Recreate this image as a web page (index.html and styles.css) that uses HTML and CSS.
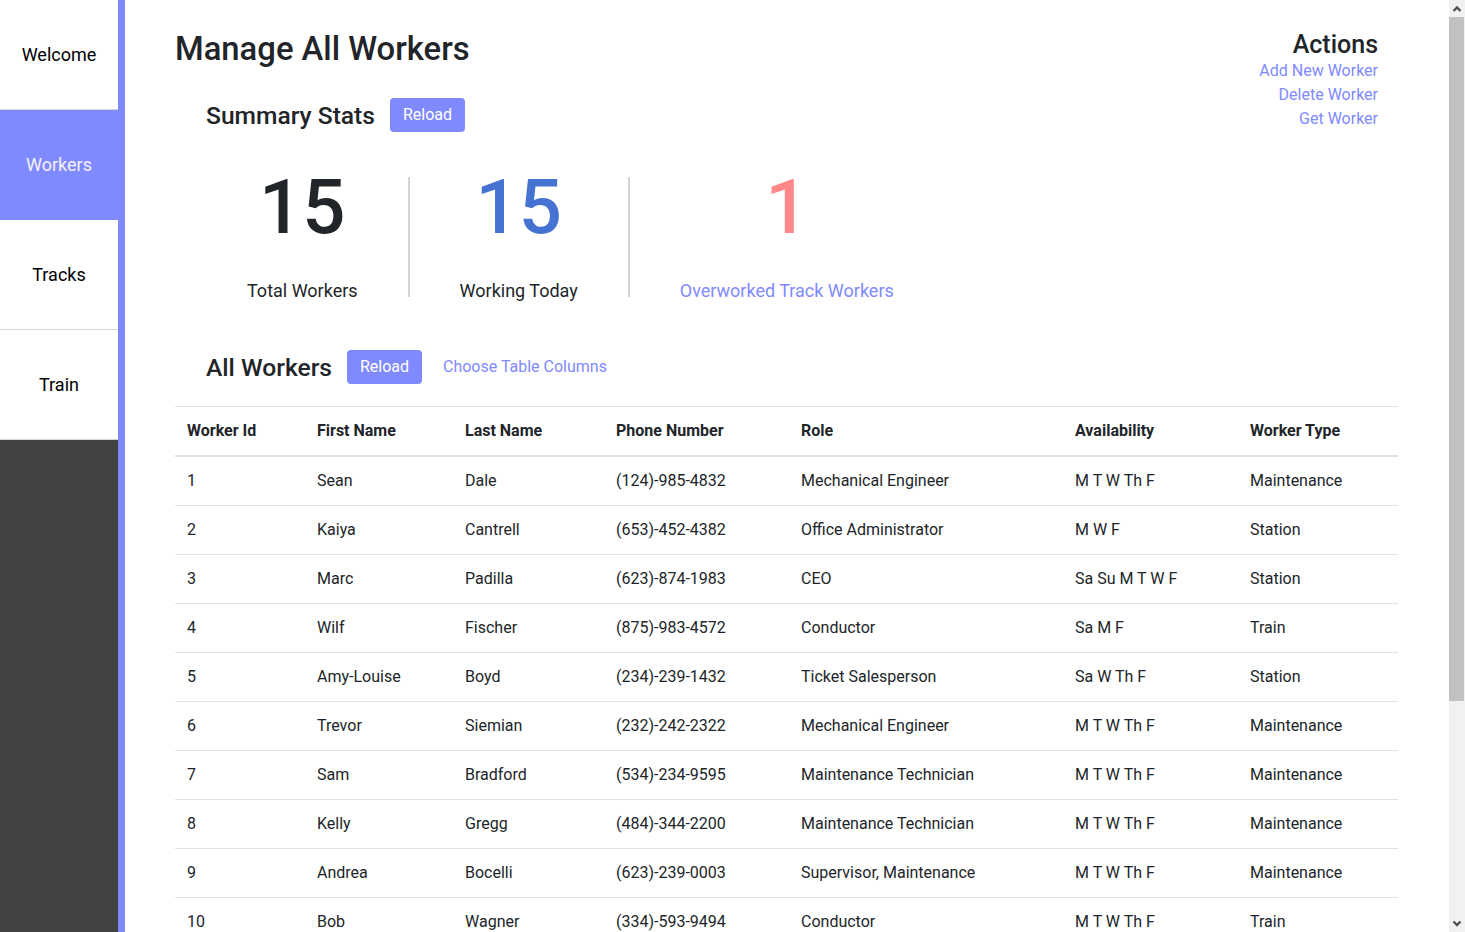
FILE: index.html
```html
<!DOCTYPE html>
<html lang="en">
<head>
<meta charset="utf-8">
<title>Manage All Workers</title>
<link rel="stylesheet" href="styles.css">
</head>
<body>
<div class="app">
  <nav class="sidebar">
    <a class="nav-item">Welcome</a>
    <a class="nav-item active">Workers</a>
    <a class="nav-item">Tracks</a>
    <a class="nav-item">Train</a>
    <div class="nav-fill"></div>
  </nav>
  <main class="main">
    <div class="top">
      <div class="top-left">
        <h1 class="title">Manage All Workers</h1>
        <div class="section-head summary-head">
          <h3 class="section-title">Summary Stats</h3>
          <button class="btn">Reload</button>
        </div>
        <div class="stats">
          <div class="stat">
            <div class="stat-num">15</div>
            <div class="stat-label">Total Workers</div>
          </div>
          <div class="stat">
            <div class="stat-num blue">15</div>
            <div class="stat-label">Working Today</div>
          </div>
          <div class="stat">
            <div class="stat-num red">1</div>
            <div class="stat-label link">Overworked Track Workers</div>
          </div>
        </div>
      </div>
      <div class="actions">
        <h3 class="actions-title">Actions</h3>
        <a class="link">Add New Worker</a>
        <a class="link">Delete Worker</a>
        <a class="link">Get Worker</a>
      </div>
    </div>

    <div class="section-head workers-head">
      <h3 class="section-title">All Workers</h3>
      <button class="btn">Reload</button>
      <a class="link choose">Choose Table Columns</a>
    </div>

    <table class="table">
      <colgroup>
        <col class="c1"><col class="c2"><col class="c3"><col class="c4"><col class="c5"><col class="c6"><col class="c7">
      </colgroup>
      <thead>
        <tr><th>Worker Id</th><th>First Name</th><th>Last Name</th><th>Phone Number</th><th>Role</th><th>Availability</th><th>Worker Type</th></tr>
      </thead>
      <tbody>
        <tr><td>1</td><td>Sean</td><td>Dale</td><td>(124)-985-4832</td><td>Mechanical Engineer</td><td>M T W Th F</td><td>Maintenance</td></tr>
        <tr><td>2</td><td>Kaiya</td><td>Cantrell</td><td>(653)-452-4382</td><td>Office Administrator</td><td>M W F</td><td>Station</td></tr>
        <tr><td>3</td><td>Marc</td><td>Padilla</td><td>(623)-874-1983</td><td>CEO</td><td>Sa Su M T W F</td><td>Station</td></tr>
        <tr><td>4</td><td>Wilf</td><td>Fischer</td><td>(875)-983-4572</td><td>Conductor</td><td>Sa M F</td><td>Train</td></tr>
        <tr><td>5</td><td>Amy-Louise</td><td>Boyd</td><td>(234)-239-1432</td><td>Ticket Salesperson</td><td>Sa W Th F</td><td>Station</td></tr>
        <tr><td>6</td><td>Trevor</td><td>Siemian</td><td>(232)-242-2322</td><td>Mechanical Engineer</td><td>M T W Th F</td><td>Maintenance</td></tr>
        <tr><td>7</td><td>Sam</td><td>Bradford</td><td>(534)-234-9595</td><td>Maintenance Technician</td><td>M T W Th F</td><td>Maintenance</td></tr>
        <tr><td>8</td><td>Kelly</td><td>Gregg</td><td>(484)-344-2200</td><td>Maintenance Technician</td><td>M T W Th F</td><td>Maintenance</td></tr>
        <tr><td>9</td><td>Andrea</td><td>Bocelli</td><td>(623)-239-0003</td><td>Supervisor, Maintenance</td><td>M T W Th F</td><td>Maintenance</td></tr>
        <tr><td>10</td><td>Bob</td><td>Wagner</td><td>(334)-593-9494</td><td>Conductor</td><td>M T W Th F</td><td>Train</td></tr>
        <tr><td>11</td><td>Priya</td><td>Sharma</td><td>(412)-555-0198</td><td>Track Inspector</td><td>Sa Su M T W Th F</td><td>Track</td></tr>
        <tr><td>12</td><td>Leon</td><td>Hart</td><td>(745)-310-2284</td><td>Track Technician</td><td>M T W Th F</td><td>Track</td></tr>
        <tr><td>13</td><td>Nadia</td><td>Okafor</td><td>(918)-402-7731</td><td>Conductor</td><td>Su M T W</td><td>Train</td></tr>
        <tr><td>14</td><td>Ruben</td><td>Castillo</td><td>(305)-667-4120</td><td>Station Attendant</td><td>Sa Su Th F</td><td>Station</td></tr>
        <tr><td>15</td><td>Hannah</td><td>Lindqvist</td><td>(561)-820-3397</td><td>Track Engineer</td><td>M W Th F</td><td>Track</td></tr>
      </tbody>
    </table>
  </main>
  <div class="scrollbar" aria-hidden="true">
    <div class="sb-btn sb-up">
      <svg width="16" height="17" viewBox="0 0 16 17"><polyline points="4.5,11 8,7.5 11.5,11" fill="none" stroke="#505050" stroke-width="2.4"/></svg>
    </div>
    <div class="sb-thumb"></div>
    <div class="sb-track"></div>
    <div class="sb-btn sb-down">
      <svg width="16" height="16" viewBox="0 0 16 16"><polyline points="4.5,5.5 8,9 11.5,5.5" fill="none" stroke="#505050" stroke-width="2.4"/></svg>
    </div>
  </div>
</div>
</body>
</html>
```

FILE: styles.css
```css
* { box-sizing: border-box; }

html, body {
  margin: 0;
  padding: 0;
}

body {
  font-family: Roboto, "Liberation Sans", Arial, sans-serif;
  font-size: 16px;
  line-height: 1.5;
  color: #212529;
  background: #fff;
}

.app {
  display: flex;
  min-height: 100vh;
}

/* Sidebar */
.sidebar {
  width: 125px;
  flex: 0 0 125px;
  display: flex;
  flex-direction: column;
  border-right: 7px solid #808aff;
}

.nav-item {
  height: 110px;
  flex: 0 0 110px;
  display: flex;
  align-items: center;
  justify-content: center;
  font-size: 18px;
  color: #000;
  border-bottom: 1px solid #d6d6d6;
  cursor: pointer;
}

.nav-item.active {
  background: #808aff;
  color: #f4f2ff;
  border-bottom-color: #808aff;
}

.nav-fill {
  flex: 1;
  background: #424242;
}

/* Main */
.main {
  flex: 1;
  min-width: 0;
  padding: 0 51px 35px 50px;
}

.top {
  display: flex;
  justify-content: space-between;
  align-items: flex-start;
}

.title {
  margin: 30px 0 0 0;
  font-size: 32.8px;
  font-weight: 500;
  line-height: 1.2;
}

.section-head {
  display: flex;
  align-items: center;
  padding-left: 31px;
}

.summary-head {
  margin-top: 29px;
}

.section-title {
  margin: 0 15px 0 0;
  font-size: 24.6px;
  font-weight: 500;
  line-height: 1.2;
}

.btn {
  font-family: inherit;
  font-size: 16px;
  line-height: 24px;
  padding: 5px 12px;
  width: 75px;
  border: 0;
  border-radius: 4px;
  background: #808aff;
  color: #fff;
  cursor: pointer;
}

.link {
  color: #808aff;
  cursor: pointer;
}

.choose {
  margin-left: 21px;
}

/* Stats */
.stats {
  display: flex;
  margin-top: 45px;
  padding-left: 22px;
}

.stat {
  display: flex;
  flex-direction: column;
  align-items: center;
  padding: 0 50px;
  height: 120px;
}

.stat + .stat {
  border-left: 2px solid #d3d3d3;
}

.stat-num {
  font-size: 76px;
  font-weight: 500;
  line-height: 60px;
  height: 60px;
}

.stat-num.blue { color: #4673d1; }
.stat-num.red { color: #ff8787; }

.stat-label {
  margin-top: 45px;
  font-size: 18px;
  line-height: 18px;
}

/* Actions */
.actions {
  display: flex;
  flex-direction: column;
  align-items: flex-end;
  margin-top: 31px;
  margin-right: 20px;
}

.actions-title {
  margin: 0;
  font-size: 25px;
  font-weight: 500;
  line-height: 28px;
}

.actions .link {
  line-height: 24px;
}

/* Workers section */
.workers-head {
  margin-top: 53px;
}

.table {
  width: 100%;
  margin-top: 22px;
  border-collapse: collapse;
  table-layout: fixed;
}

.c1 { width: 130px; }
.c2 { width: 148px; }
.c3 { width: 151px; }
.c4 { width: 185px; }
.c5 { width: 274px; }
.c6 { width: 175px; }
.c7 { width: 160px; }

.table th,
.table td {
  padding: 12px;
  text-align: left;
  vertical-align: top;
  line-height: 24px;
  border-top: 1px solid #dee2e6;
  white-space: nowrap;
}

.table th {
  font-weight: 700;
  border-bottom: 2px solid #dee2e6;
}

/* Scrollbar strip (drawn, as in the captured window) */
.scrollbar {
  flex: 0 0 16px;
  width: 16px;
  height: 100vh;
  align-self: flex-start;
  display: flex;
  flex-direction: column;
  background: #f1f1f1;
}

.sb-btn {
  display: flex;
}

.sb-up { height: 17px; }
.sb-down { height: 16px; }

.sb-thumb {
  height: 684px;
  width: 15px;
  background: #c1c1c1;
}

.sb-track {
  flex: 1;
}
```
